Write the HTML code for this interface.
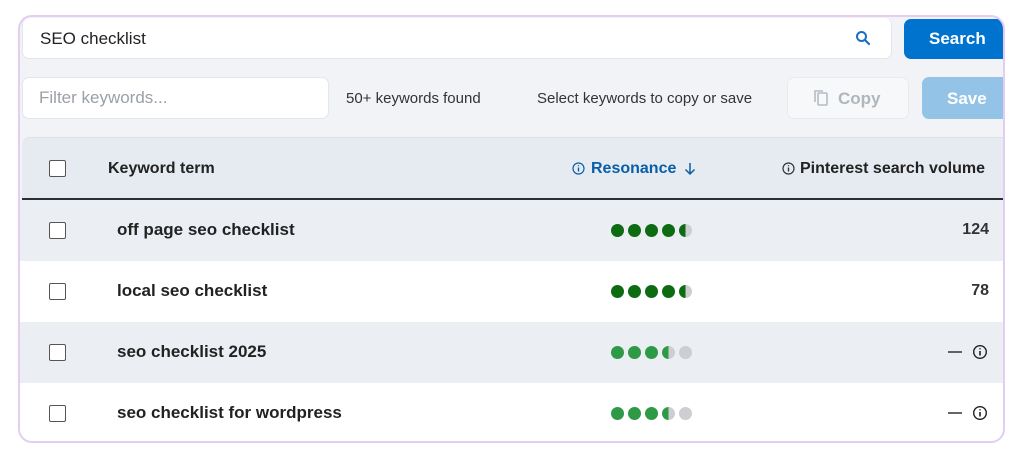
<!DOCTYPE html><html><head><style>
*{box-sizing:border-box;margin:0;padding:0}
body{width:1024px;height:461px;background:#fff;font-family:"Liberation Sans",sans-serif;position:relative;overflow:hidden}
.frame{position:absolute;left:18px;top:15px;width:987px;height:428px;border:2px solid #e4cdf3;border-radius:14px;background:#f1f3f6;overflow:hidden}
.a{position:absolute}
.inp{background:#fff;border:1px solid #e3e6ea;border-radius:7px}
.t{font-size:16px;color:#222}
.row{position:absolute;left:0;width:985px;height:61px}
.cb{position:absolute;left:29px;width:17px;height:17px;border:1.5px solid #555;border-radius:2px;background:#fff}
.kw{position:absolute;left:97px;font-weight:bold;font-size:17px;color:#222}
.dots{position:absolute;left:591px;display:flex;gap:4px}
.d{width:13px;height:13px;border-radius:50%}
.num{position:absolute;right:16px;font-size:16px;color:#333;font-weight:bold}
.ic{position:absolute}
</style></head><body>
<div class="frame">
<div class="a inp" style="left:2px;top:1px;width:870px;height:41px;border-top:none"></div>
<div class="a t" style="left:20px;top:12px;font-size:17px">SEO checklist</div>
<svg class="a" style="left:835px;top:13px" width="16" height="16" viewBox="0 0 16 16"><circle cx="6.5" cy="6.5" r="4.5" stroke="#1a6fc4" stroke-width="2" fill="none"/><path d="M10 10l4 4" stroke="#1a6fc4" stroke-width="2.2" stroke-linecap="round"/></svg>
<div class="a" style="left:884px;top:2px;width:101px;height:40px;background:#0073cf;border-radius:7px 0 0 7px;color:#fff;font-weight:bold;font-size:17px;padding:10px 0 0 25px">Search</div>
<div class="a inp" style="left:2px;top:60px;width:307px;height:42px"></div>
<div class="a" style="left:19px;top:71px;font-size:17px;color:#9aa0a8">Filter keywords...</div>
<div class="a" style="left:326px;top:73px;font-size:15px;color:#333">50+ keywords found</div>
<div class="a" style="left:517px;top:73px;font-size:15px;color:#333">Select keywords to copy or save</div>
<div class="a inp" style="left:767px;top:60px;width:122px;height:42px;background:#f7f8fa;border-color:#e8eaee"></div>
<svg class="a" style="left:793px;top:72px" width="16" height="18" viewBox="0 0 16 18"><rect x="5" y="4" width="9" height="12" rx="1" stroke="#b6bcc4" stroke-width="1.6" fill="none"/><path d="M2 13V2h8" stroke="#b6bcc4" stroke-width="1.6" fill="none"/></svg>
<div class="a" style="left:818px;top:72px;font-size:17px;font-weight:bold;color:#b0b6be">Copy</div>
<div class="a" style="left:902px;top:60px;width:83px;height:42px;background:#93c3e6;border-radius:7px 0 0 7px;color:#fff;font-weight:bold;font-size:17px;padding:12px 0 0 25px">Save</div>
<div class="a" style="left:2px;top:120px;width:983px;height:63px;background:#e6ebf2;border-top:1px solid #dde2e8;border-bottom:2px solid #2a2f36;border-radius:8px 0 0 0"></div>
<div class="cb" style="top:143px"></div>
<div class="a" style="left:88px;top:143px;font-weight:bold;font-size:16px;color:#222">Keyword term</div>
<svg class="ic" style="left:552px;top:145px" width="13" height="13" viewBox="0 0 13 13"><circle cx="6.5" cy="6.5" r="5.5" fill="none" stroke="#0a5ea8" stroke-width="1.2"/><path d="M6.5 5.5v4M6.5 3.3v.9" stroke="#0a5ea8" stroke-width="1.4"/></svg>
<div class="a" style="left:571px;top:143px;font-weight:bold;font-size:16px;color:#0a5ea8">Resonance</div>
<svg class="ic" style="left:664px;top:145px" width="12" height="14" viewBox="0 0 12 14"><path d="M6 1v11M1.5 7.5L6 12l4.5-4.5" fill="none" stroke="#0a5ea8" stroke-width="1.5"/></svg>
<svg class="ic" style="left:762px;top:145px" width="13" height="13" viewBox="0 0 13 13"><circle cx="6.5" cy="6.5" r="5.5" fill="none" stroke="#333" stroke-width="1.2"/><path d="M6.5 5.5v4M6.5 3.3v.9" stroke="#333" stroke-width="1.4"/></svg>
<div class="a" style="left:780px;top:143px;font-weight:bold;font-size:16px;color:#222">Pinterest search volume</div>

<div class="row" style="top:183px;background:#ebeff4"><div class="cb" style="top:22px"></div><div class="kw" style="top:20px">off page seo checklist</div>
<div class="dots" style="top:24px"><div class="d" style="background:#0d6b12"></div><div class="d" style="background:#0d6b12"></div><div class="d" style="background:#0d6b12"></div><div class="d" style="background:#0d6b12"></div><div class="d" style="background:linear-gradient(90deg,#0d6b12 50%,#ccced1 50%)"></div></div><div class="num" style="top:21px">124</div></div>
<div class="row" style="top:244px;background:#fff"><div class="cb" style="top:22px"></div><div class="kw" style="top:20px">local seo checklist</div>
<div class="dots" style="top:24px"><div class="d" style="background:#0d6b12"></div><div class="d" style="background:#0d6b12"></div><div class="d" style="background:#0d6b12"></div><div class="d" style="background:#0d6b12"></div><div class="d" style="background:linear-gradient(90deg,#0d6b12 50%,#ccced1 50%)"></div></div><div class="num" style="top:21px">78</div></div>
<div class="row" style="top:305px;background:#ebeff4"><div class="cb" style="top:22px"></div><div class="kw" style="top:20px">seo checklist 2025</div>
<div class="dots" style="top:24px"><div class="d" style="background:#2e9a46"></div><div class="d" style="background:#2e9a46"></div><div class="d" style="background:#2e9a46"></div><div class="d" style="background:linear-gradient(90deg,#2e9a46 50%,#ccced1 50%)"></div><div class="d" style="background:#ccced1"></div></div>
<svg class="ic" style="left:926px;top:22px" width="44" height="16" viewBox="0 0 44 16"><path d="M2 8h14" stroke="#333" stroke-width="1.5"/><circle cx="34" cy="8" r="6.3" fill="none" stroke="#222" stroke-width="1.4"/><path d="M34 7v4.5M34 4.3v1.1" stroke="#222" stroke-width="1.6"/></svg></div>
<div class="row" style="top:366px;background:#fff"><div class="cb" style="top:22px"></div><div class="kw" style="top:20px">seo checklist for wordpress</div>
<div class="dots" style="top:24px"><div class="d" style="background:#2e9a46"></div><div class="d" style="background:#2e9a46"></div><div class="d" style="background:#2e9a46"></div><div class="d" style="background:linear-gradient(90deg,#2e9a46 50%,#ccced1 50%)"></div><div class="d" style="background:#ccced1"></div></div>
<svg class="ic" style="left:926px;top:22px" width="44" height="16" viewBox="0 0 44 16"><path d="M2 8h14" stroke="#333" stroke-width="1.5"/><circle cx="34" cy="8" r="6.3" fill="none" stroke="#222" stroke-width="1.4"/><path d="M34 7v4.5M34 4.3v1.1" stroke="#222" stroke-width="1.6"/></svg></div>
</div>
</body></html>
